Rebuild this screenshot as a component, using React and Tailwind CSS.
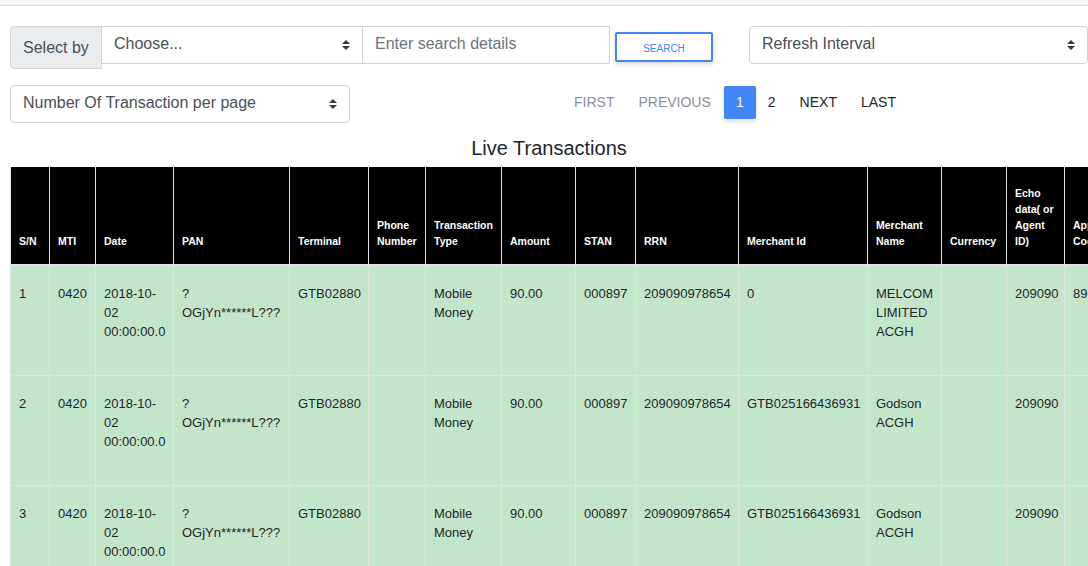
import React from 'react';

const headers = [
  { label: 'S/N', w: 39 },
  { label: 'MTI', w: 46 },
  { label: 'Date', w: 78, pr: 'pr-[8px]' },
  { label: 'PAN', w: 116 },
  { label: 'Terminal', w: 79 },
  { label: 'Phone Number', w: 57 },
  { label: 'Transaction Type', w: 76 },
  { label: 'Amount', w: 74 },
  { label: 'STAN', w: 60 },
  { label: 'RRN', w: 103 },
  { label: 'Merchant Id', w: 129 },
  { label: 'Merchant Name', w: 74 },
  { label: 'Currency', w: 65 },
  { label: 'Echo data( or Agent ID)', w: 58 },
  { label: 'Approval Code', w: 72 },
  { label: 'Response Code', w: 80 },
  { label: 'Status', w: 80 },
];

const rows = [
  ['1', '0420', '2018-10-02 00:00:00.0', '? OGjYn******L???', 'GTB02880', '', 'Mobile Money', '90.00', '000897', '209090978654', '0', 'MELCOM LIMITED ACGH', '', '209090', '898765', '00', 'Approved'],
  ['2', '0420', '2018-10-02 00:00:00.0', '? OGjYn******L???', 'GTB02880', '', 'Mobile Money', '90.00', '000897', '209090978654', 'GTB025166436931', 'Godson ACGH', '', '209090', '', '00', 'Approved'],
  ['3', '0420', '2018-10-02 00:00:00.0', '? OGjYn******L???', 'GTB02880', '', 'Mobile Money', '90.00', '000897', '209090978654', 'GTB025166436931', 'Godson ACGH', '', '209090', '', '00', 'Approved'],
];

function Caret() {
  return (
    <svg width="8" height="11" viewBox="0 0 8 11" className="absolute right-[12px] top-1/2 -translate-y-1/2">
      <path d="M0 4.5 L4 0.5 L8 4.5 Z" fill="#343a40" />
      <path d="M0 6.5 L4 10.5 L8 6.5 Z" fill="#343a40" />
    </svg>
  );
}

function FakeSelect({ label, className }) {
  return (
    <div className={`relative h-[38px] border border-[#ced4da] bg-white flex items-center pl-[12px] text-[16px] text-[#495057] ${className}`}>
      <span className="-mt-[2px]">{label}</span>
      <Caret />
    </div>
  );
}

export default function App() {
  const total = headers.reduce((s, h) => s + h.w, 0);
  return (
    <div className="h-screen w-full overflow-hidden bg-white text-[#212529]" style={{ fontFamily: '"Liberation Sans", Arial, sans-serif' }}>
      <div className="h-[6px] bg-[#f5f5f5] border-b border-[#dadada]" />

      <div className="pl-[10px]">
        {/* row 1 */}
        <div className="flex items-start mt-[20px]">
          <div className="flex items-start">
            <div className="w-[92px] h-[43px] bg-[#e9ecef] border border-[#ced4da] rounded-l-[4px] flex items-center pl-[12px] text-[16px] text-[#495057]">
              Select by
            </div>
            <FakeSelect label="Choose..." className="w-[262px] -ml-px" />
            <div className="w-[248px] h-[38px] border border-[#ced4da] -ml-px flex items-center pl-[12px] text-[16px] text-[#6c757d]">
              <span className="-mt-[2px]">Enter search details</span>
            </div>
          </div>
          <button className="ml-[5px] mt-[6px] w-[98px] h-[30px] border-2 border-[#4285f4] bg-white text-[10px] text-[#4285f4] rounded-[2px] shadow-[0_2px_5px_rgba(0,0,0,0.16)] flex items-center justify-center pt-[2px]">
            SEARCH
          </button>
          <FakeSelect label="Refresh Interval" className="ml-[36px] w-[339px] rounded-[4px]" />
        </div>

        {/* row 2 */}
        <div className="flex items-center mt-[16px]">
          <FakeSelect label="Number Of Transaction per page" className="w-[340px] rounded-[4px]" />
          <div className="flex items-center ml-[212px] text-[14px] -mt-[4px]">
            <span className="px-[12px] text-[#8a9097]">FIRST</span>
            <span className="px-[12px] text-[#8a9097]">PREVIOUS</span>
            <span className="w-[32px] h-[33px] ml-px flex items-center justify-center bg-[#4285f4] text-white rounded-[2px] shadow-[0_2px_5px_rgba(0,0,0,0.16)]">1</span>
            <span className="px-[12px]">2</span>
            <span className="px-[12px]">NEXT</span>
            <span className="px-[12px]">LAST</span>
          </div>
        </div>

        <div className="text-center text-[20px] leading-[24px] mt-[13px] mb-[7px]">Live Transactions</div>

        <table className="table-fixed border-collapse" style={{ width: total }}>
          <colgroup>
            {headers.map((h) => (
              <col key={h.label} style={{ width: h.w }} />
            ))}
          </colgroup>
          <thead>
            <tr>
              {headers.map((h) => (
                <th
                  key={h.label}
                  className="bg-black text-white text-[10.5px] leading-[16px] font-bold text-left align-bottom pl-[8px] pr-[4px] pt-[16px] pb-[15px] h-[98px] border border-[#dee2e6] border-t-0 border-b-2"
                >
                  {h.label}
                </th>
              ))}
            </tr>
          </thead>
          <tbody>
            {rows.map((r, i) => (
              <tr key={i} className="bg-[#c3e6cb]">
                {r.map((c, j) => (
                  <td
                    key={j}
                    className={`align-top h-[110px] pl-[8px] pt-[18px] text-[13px] leading-[19px] border border-[#dde6de] ${headers[j].pr || 'pr-[2px]'}`}
                  >
                    {c}
                  </td>
                ))}
              </tr>
            ))}
          </tbody>
        </table>
      </div>
    </div>
  );
}
